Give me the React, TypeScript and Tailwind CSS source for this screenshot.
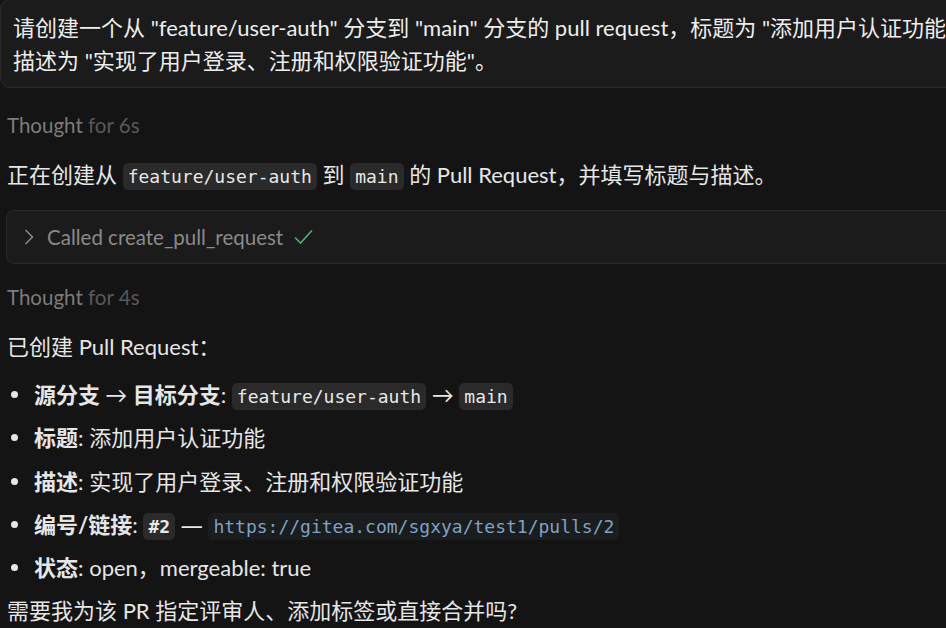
import { FC, ReactNode } from 'react';

const Code: FC<{ children: ReactNode; link?: boolean; bold?: boolean }> = ({ children, link, bold }) => (
    <code
        className={`rounded-[5px] px-[5px] py-[3px] font-['DejaVu_Sans_Mono','Liberation_Mono',monospace] text-[18px] leading-none ${
            link ? 'bg-[#1b1c1e] text-[#7ea2c4]' : 'bg-[#2a2a2a] text-[#e8e8e8]'
        } ${bold ? 'font-bold' : 'font-normal'}`}
    >
        {children}
    </code>
);

const Thought: FC<{ secs: number }> = ({ secs }) => (
    <div className="h-[33px] text-[20.5px] leading-[33px] text-[#7c7c7c]">
        Thought <span className="text-[#595959]">for {secs}s</span>
    </div>
);

const Bullet: FC<{ label: ReactNode; children: ReactNode }> = ({ label, children }) => (
    <li className="flex h-[33px] items-center">
        <span className="ml-[4px] mr-[16px] h-[7px] w-[7px] shrink-0 rounded-full bg-[#e6e6e6]" />
        <span className="h-[33px] whitespace-nowrap leading-[33px]">
            <b className="font-bold">{label}</b>: {children}
        </span>
    </li>
);

export default function App() {
    return (
        <div className="h-[628px] w-[946px] overflow-hidden bg-[#141414] font-['Lato','Noto_Sans_CJK_SC',sans-serif] text-[22px] text-[#e6e6e6]">
            <div className="w-[1200px]">
                <div className="-mt-px rounded-[10px] border border-[#2c2c2c] bg-[#1b1b1b] px-[12px] pb-[10px] pt-[11px] text-[#ededed]">
                    <div className="h-[33px] whitespace-nowrap leading-[33px]">
                        请创建一个从 "feature/user-auth" 分支到 "main" 分支的 pull request，标题为 "添加用户认证功能"，
                    </div>
                    <div className="h-[33px] whitespace-nowrap leading-[33px]">描述为 "实现了用户登录、注册和权限验证功能"。</div>
                </div>
                <div className="flex flex-col pl-[7px]">
                    <div className="mt-[21px]">
                        <Thought secs={6} />
                    </div>
                    <p className="mt-[16px] h-[33px] whitespace-nowrap leading-[33px]">
                        正在创建从 <Code>feature/user-auth</Code> 到 <Code>main</Code> 的 Pull Request，并填写标题与描述。
                    </p>
                    <div className="mt-[19px] -ml-px flex h-[54px] items-center rounded-[8px] border border-[#2a2a2a] bg-[#1b1b1b] pl-[17px] text-[20.5px] text-[#8a8a8a]">
                        <svg width="10" height="16" viewBox="0 0 10 16" fill="none" stroke="#8a8a8a" strokeWidth="1.5">
                            <path d="M1.5 1 L8.5 8 L1.5 15" />
                        </svg>
                        <span className="ml-[13px]">Called create_pull_request</span>
                        <svg className="ml-[11px]" width="19" height="16" viewBox="0 0 19 16" fill="none" stroke="#4fae74" strokeWidth="1.6">
                            <path d="M1 8.5 L6.5 14 L18 1.5" />
                        </svg>
                    </div>
                    <div className="mt-[17px]">
                        <Thought secs={4} />
                    </div>
                    <p className="mt-[16px] h-[33px] leading-[33px]">已创建 Pull Request：</p>
                    <ul className="mt-[15px] flex flex-col gap-[10.3px]">
                        <Bullet
                            label={
                                <>
                                    源分支 <span className="font-normal">→</span> 目标分支
                                </>
                            }
                        >
                            <Code>feature/user-auth</Code> → <Code>main</Code>
                        </Bullet>
                        <Bullet label="标题">添加用户认证功能</Bullet>
                        <Bullet label="描述">实现了用户登录、注册和权限验证功能</Bullet>
                        <Bullet label="编号/链接">
                            <Code bold>#2</Code> <span className="font-['Noto_Sans',sans-serif]">—</span>{' '}
                            <Code link>https://gitea.com/sgxya/test1/pulls/2</Code>
                        </Bullet>
                        <Bullet label="状态">open，mergeable: true</Bullet>
                    </ul>
                    <p className="mt-[10px] h-[33px] whitespace-nowrap leading-[33px]">需要我为该 PR 指定评审人、添加标签或直接合并吗?</p>
                </div>
            </div>
        </div>
    );
}
